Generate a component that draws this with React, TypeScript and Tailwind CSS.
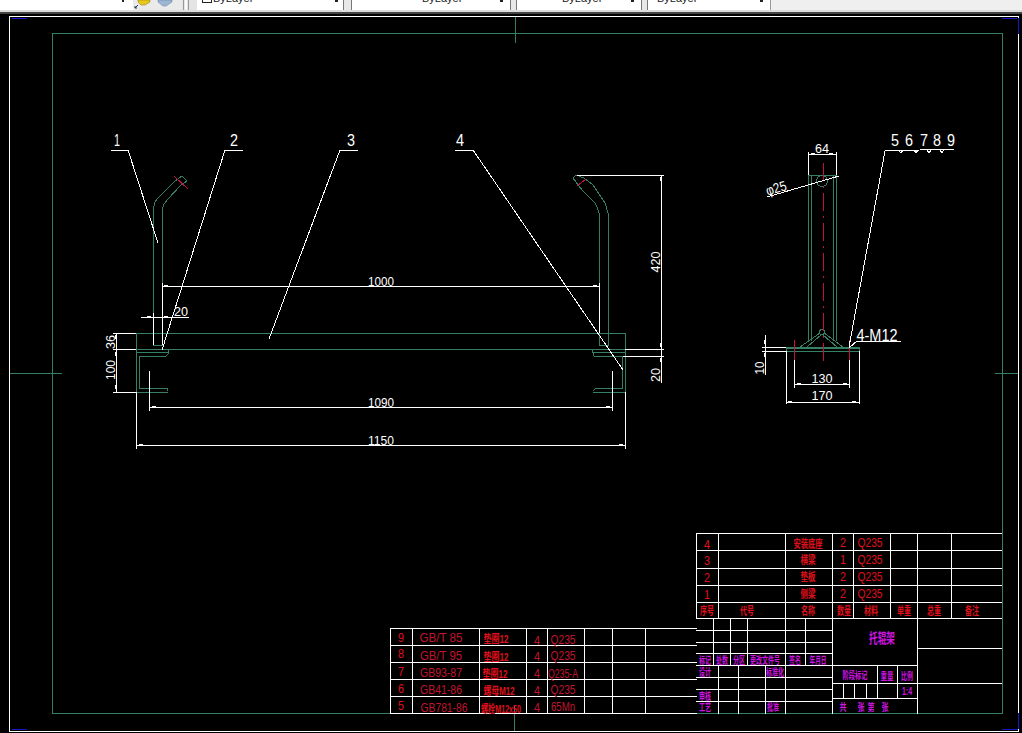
import React from 'react';

const GREEN = '#358062';
const CRIMSON = '#c0114a';
const RED = '#e0101c';
const DARK_RED = '#c2142f';
const MAGENTA = '#cf14e0';
const FONT = '"Liberation Sans", "Noto Sans CJK SC", sans-serif';

type Seg = [number, number, number, number];

function Segs({ color, items, dash }: { color: string; items: Seg[]; dash?: string }) {
  return (
    <g stroke={color} strokeWidth={1} strokeDasharray={dash} fill="none">
      {items.map((s, i) => (
        <line key={i} x1={s[0]} y1={s[1]} x2={s[2]} y2={s[3]} />
      ))}
    </g>
  );
}

function Poly({ pts, color = GREEN }: { pts: string; color?: string }) {
  return <polyline points={pts} fill="none" stroke={color} strokeWidth={1} />;
}

function T({
  x,
  y,
  t,
  w,
  s = 13,
  c = '#ffffff',
  r,
  b,
}: {
  x: number;
  y: number;
  t: string;
  w?: number;
  s?: number;
  c?: string;
  r?: number;
  b?: boolean;
}) {
  return (
    <text
      x={x}
      y={y}
      fill={c}
      fontSize={s}
      fontWeight={b ? 700 : 400}
      textAnchor="middle"
      dominantBaseline="central"
      textLength={w}
      lengthAdjust={w ? 'spacingAndGlyphs' : undefined}
      transform={r ? `rotate(${r} ${x} ${y})` : undefined}
      style={{ fontFamily: FONT }}
    >
      {t}
    </text>
  );
}

// little filled ticks that stand in for the dimension arrows
function Ticks({ items }: { items: [number, number][] }) {
  return (
    <g fill="#ffffff">
      {items.map((p, i) => (
        <rect key={i} x={p[0] - 2} y={p[1] - 1} width={4} height={2} />
      ))}
    </g>
  );
}

function VTicks({ items }: { items: [number, number][] }) {
  return (
    <g fill="#ffffff">
      {items.map((p, i) => (
        <rect key={i} x={p[0] - 1} y={p[1] - 2} width={2} height={4} />
      ))}
    </g>
  );
}

const hLines = (x1: number, x2: number, ys: number[]): Seg[] => ys.map((y) => [x1, y, x2, y]);
const vLines = (y1: number, y2: number, xs: number[]): Seg[] => xs.map((x) => [x, y1, x, y2]);

function FrontView() {
  return (
    <g>
      {/* left bracket */}
      <Poly pts="153,345 153,210 155,202 158,198 175,181 182,176 187,181 181,185 168,199 164,204 162,210 162,345 153,345" />
      {/* right bracket */}
      <Poly pts="599,345 599,213 597,207 595,203 582,190 573,178 576,175 584,178 593,185 605,203 608,213 608,345 599,345" />
      <Segs color={CRIMSON} items={[[174, 176, 188, 189], [577, 186, 586, 179]]} />
      {/* rail and channels */}
      <Segs
        color={GREEN}
        items={[
          [136, 333, 625, 333],
          [136, 349, 625, 349],
          [136, 333, 136, 392],
          [625, 333, 625, 392],
          [136, 352, 168, 352],
          [592, 352, 625, 352],
          [136, 392, 168, 392],
          [593, 392, 625, 392],
          [592, 349, 592, 352],
        ]}
      />
      <Poly pts="168,349 168,354 166,356 139,356 139,388 167,388 168,391" />
      <Poly pts="593,352 594,356 622,356 622,388 596,388 593,391" />
      {/* leaders */}
      <Segs
        color="#ffffff"
        items={[
          [111, 150, 128, 150],
          [128, 150, 158, 243],
          [225, 150, 243, 150],
          [225, 150, 162, 350],
          [340, 150, 358, 150],
          [340, 150, 269, 339],
          [455, 150, 473, 150],
          [473, 150, 623, 370],
        ]}
      />
      <T x={117} y={140} t="1" s={16} w={6} />
      <T x={234} y={140} t="2" s={16} w={8} />
      <T x={351} y={140} t="3" s={16} w={8} />
      <T x={460} y={140} t="4" s={16} w={8} />
      {/* dimensions */}
      <Segs
        color="#ffffff"
        items={[
          [162, 286, 599, 286],
          [162, 283, 162, 345],
          [153, 313, 153, 345],
          [599, 283, 599, 333],
          [141, 317, 189, 317],
          [149, 407, 612, 407],
          [149, 371, 149, 411],
          [612, 371, 612, 411],
          [136, 445, 625, 445],
          [136, 392, 136, 449],
          [625, 392, 625, 449],
          [116, 333, 116, 392],
          [113, 333, 136, 333],
          [113, 349, 136, 349],
          [113, 392, 136, 392],
          [577, 175, 664, 175],
          [661, 175, 661, 383],
          [625, 349, 664, 349],
          [623, 356, 664, 356],
        ]}
      />
      <Ticks items={[[166, 286], [595, 286], [149, 317], [166, 317], [154, 407], [608, 407], [141, 445], [621, 445]]} />
      <VTicks items={[[116, 337], [116, 354], [116, 387], [661, 179], [661, 345], [661, 360]]} />
      <T x={381} y={281} t="1000" w={26} />
      <T x={181} y={311} t="20" w={14} />
      <T x={381} y={402} t="1090" w={26} />
      <T x={381} y={440} t="1150" w={26} />
      <T x={110} y={342} t="36" r={-90} w={14} />
      <T x={110} y={370} t="100" r={-90} w={20} />
      <T x={655} y={262} t="420" r={-90} w={21} />
      <T x={655} y={375} t="20" r={-90} w={14} />
    </g>
  );
}

function SideView() {
  return (
    <g>
      <Segs
        color={GREEN}
        items={[
          ...vLines(175, 341, [808, 811, 833, 836]),
          [808, 175, 836, 175],
          [786, 347, 859, 347],
          [786, 351, 859, 351],
          [786, 348, 859, 348],
          [786, 347, 786, 351],
          [859, 347, 859, 351],
          [820, 333, 800, 347],
          [824, 333, 843, 347],
          [821, 335, 807, 347],
          [823, 335, 837, 347],
        ]}
      />
      <circle cx={822} cy={181} r={5.5} fill="none" stroke={GREEN} />
      <circle cx={822} cy={332} r={2.5} fill="none" stroke={GREEN} />
      <Segs color={CRIMSON} dash="18 5 2 5" items={[[823, 163, 823, 362]]} />
      <Segs color={CRIMSON} items={[[794, 340, 794, 360], [849, 340, 849, 360]]} />
      <Segs
        color="#ffffff"
        items={[
          [885, 151, 955, 149],
          [885, 151, 849, 347],
          [857, 341, 901, 341],
          [857, 341, 849, 348],
          [808, 152, 808, 175],
          [836, 152, 836, 175],
          [808, 154, 836, 154],
          [767, 197, 839, 176],
          [762, 347, 786, 347],
          [762, 351, 786, 351],
          [765, 335, 765, 375],
          [794, 360, 794, 388],
          [849, 360, 849, 388],
          [794, 384, 849, 384],
          [786, 351, 786, 404],
          [859, 351, 859, 404],
          [786, 402, 859, 402],
        ]}
      />
      {/* bumps below the 5 6 7 8 9 leader */}
      <Segs
        color="#ffffff"
        items={[
          [899, 151, 901, 153],
          [903, 150, 901, 153],
          [914, 150, 916, 153],
          [918, 150, 916, 153],
          [927, 150, 929, 153],
          [931, 150, 929, 153],
          [940, 150, 942, 153],
          [944, 149, 942, 153],
        ]}
      />
      <Ticks items={[[813, 154], [831, 154], [799, 384], [845, 384], [790, 402], [854, 402]]} />
      <VTicks items={[[765, 342], [765, 355]]} />
      {[
        ['5', 895],
        ['6', 909],
        ['7', 924],
        ['8', 937],
        ['9', 951],
      ].map(([t, x]) => (
        <T key={t} x={x as number} y={140} t={t as string} s={16} w={8} />
      ))}
      <T x={877} y={335} t="4-M12" s={16} w={41} />
      <T x={822} y={148} t="64" w={14} />
      <T x={776} y={188} t="φ25" r={-17} s={14} w={21} />
      <T x={759} y={368} t="10" r={-90} w={13} />
      <T x={822} y={378} t="130" w={21} />
      <T x={822} y={395} t="170" w={21} />
    </g>
  );
}

function PartsTable() {
  const rows = [
    { n: '9', ny: 637, code: 'GB/T 85', cx: 441, cw: 43, cy: 637, name: '垫圈12', nx: 496, nw: 25, qy: 640, mat: 'Q235', mw: 25, my: 639 },
    { n: '8', ny: 653, code: 'GB/T 95', cx: 441, cw: 42, cy: 655, name: '垫圈12', nx: 496, nw: 25, qy: 656, mat: 'Q235', mw: 25, my: 655 },
    { n: '7', ny: 671, code: 'GB93-87', cx: 441, cw: 42, cy: 672, name: '垫圈12', nx: 495, nw: 25, qy: 673, mat: 'Q235-A', mw: 30, my: 673 },
    { n: '6', ny: 688, code: 'GB41-86', cx: 441, cw: 42, cy: 689, name: '螺母M12', nx: 499, nw: 31, qy: 690, mat: 'Q235', mw: 25, my: 689 },
    { n: '5', ny: 705, code: 'GB781-86', cx: 444, cw: 47, cy: 707, name: '螺栓M12x50', nx: 501, nw: 40, qy: 707, mat: '65Mn', mw: 24, my: 706 },
  ];
  return (
    <g>
      <Segs
        color="#ffffff"
        items={[
          ...hLines(390, 697, [628, 645, 662, 679, 696, 713]),
          ...vLines(628, 713, [390, 412, 479, 526, 547, 584, 612, 645]),
        ]}
      />
      {rows.map((r) => (
        <g key={r.n}>
          <T x={401} y={r.ny} t={r.n} s={13} w={6} c={RED} />
          <T x={r.cx} y={r.cy} t={r.code} w={r.cw} c={DARK_RED} />
          <T x={r.nx} y={r.cy + 2} t={r.name} w={r.nw} s={11} c={RED} b />
          <T x={537} y={r.qy} t="4" c={DARK_RED} w={6} />
          <T x={563} y={r.my} t={r.mat} w={r.mw} c={DARK_RED} />
        </g>
      ))}
    </g>
  );
}

function MaterialsTable() {
  const rows = [
    { n: '4', y: 544, name: '安装底座', nw: 29, q: '2', my: 542 },
    { n: '3', y: 560, name: '横梁', nw: 15, q: '1', my: 559 },
    { n: '2', y: 577, name: '垫板', nw: 15, q: '2', my: 576 },
    { n: '1', y: 594, name: '侧梁', nw: 15, q: '2', my: 593 },
  ];
  const head: [string, number][] = [
    ['序号', 707],
    ['代号', 747],
    ['名称', 808],
    ['数量', 844],
    ['材料', 871],
    ['单重', 904],
    ['总重', 934],
    ['备注', 972],
  ];
  return (
    <g>
      <Segs
        color="#ffffff"
        items={[
          ...hLines(696, 1002, [533, 550, 568, 585, 602, 618]),
          ...vLines(533, 618, [696, 718, 785, 832, 853, 890, 917, 951]),
        ]}
      />
      {rows.map((r) => (
        <g key={r.n}>
          <T x={707} y={r.y} t={r.n} w={6} c={RED} />
          <T x={808} y={r.y} t={r.name} w={r.nw} s={11} c={RED} b />
          <T x={843} y={r.my} t={r.q} w={6} c={RED} />
          <T x={870} y={r.my} t="Q235" w={25} c={RED} />
        </g>
      ))}
      {head.map(([t, x]) => (
        <T key={t} x={x} y={611} t={t} w={14} s={11} c={RED} b />
      ))}
    </g>
  );
}

function TitleBlock() {
  const labels: [string, number, number, number][] = [
    ['标记', 705, 660, 12],
    ['处数', 722, 660, 12],
    ['分区', 739, 660, 12],
    ['更改文件号', 765, 660, 30],
    ['签名', 795, 660, 12],
    ['年月日', 818, 660, 17],
    ['设计', 705, 672, 12],
    ['标准化', 775, 672, 18],
    ['审核', 705, 696, 12],
    ['工艺', 705, 707, 12],
    ['批准', 773, 707, 12],
    ['阶段标记', 855, 675, 25],
    ['重量', 887, 676, 13],
    ['比例', 907, 676, 12],
    ['1:4', 907, 691, 10],
    ['共', 843, 707, 7],
    ['张', 861, 707, 7],
    ['第', 871, 707, 7],
    ['张', 885, 707, 7],
  ];
  return (
    <g>
      <Segs
        color="#ffffff"
        items={[
          ...hLines(696, 832, [630, 642, 653, 665, 677, 689, 701]),
          ...vLines(618, 665, [713, 730, 747, 785, 805]),
          ...vLines(665, 714, [718, 738, 765, 785]),
          [832, 618, 832, 714],
          [917, 618, 917, 714],
          [917, 648, 1002, 648],
          [832, 665, 917, 665],
          [832, 683, 1002, 683],
          [832, 698, 917, 698],
          [877, 665, 877, 698],
          [897, 665, 897, 698],
          [843, 683, 843, 698],
          [854, 683, 854, 698],
          [866, 683, 866, 698],
        ]}
      />
      {labels.map(([t, x, y, w]) => (
        <T key={t + x} x={x} y={y} t={t} w={w} s={10} c={MAGENTA} b />
      ))}
      <T x={882} y={638} t="托辊架" w={26} s={14} c={MAGENTA} b />
    </g>
  );
}

function Dropdown({ w, label, left }: { w: string; label: string; left: string }) {
  return (
    <div className={`relative flex h-full items-start overflow-hidden bg-white ${w}`}>
      <span className={`text-[11px] leading-[13px] text-[#222] -mt-[8px] ${left}`} style={{ fontFamily: FONT }}>
        {label}
      </span>
      <span className="absolute right-[7px] top-0 h-[2px] w-[3px] bg-[#222]" />
    </div>
  );
}

export default function App() {
  return (
    <div className="flex h-[733px] w-[1022px] flex-col overflow-hidden bg-black">
      {/* toolbar, cut off by the top of the window */}
      <div className="flex h-[14px] shrink-0 flex-col">
        <div className="flex h-[10px] bg-[#efefef]">
          <div className="relative h-full w-[133px] bg-white">
            <span className="absolute right-[9px] top-0 h-[2px] w-[2px] bg-[#222]" />
          </div>
          <div className="h-full w-[49px] bg-[#eaeaea]">
            <svg width="49" height="10" viewBox="0 0 49 10">
              <path d="M2 8 L5 5 M2 6 V8 H4" stroke="#223355" strokeWidth="1" fill="none" />
              <path d="M5 0 H17 V2 L12 5 H8 L5 2 Z" fill="#e8c81c" stroke="#8a7410" strokeWidth="0.5" />
              <path d="M25 0 H39 V2 L33 6 H30 L25 2 Z" fill="#9cb6d4" stroke="#5f7a99" strokeWidth="0.5" />
            </svg>
          </div>
          <div className="flex h-full w-[15px] gap-[1px] bg-[#e4e4e4] pl-[1px]">
            <span className="h-full w-[1px] bg-[#999]" />
            <span className="h-full w-[2px] bg-[#fafafa]" />
            <span className="h-full w-[1px] bg-[#999]" />
          </div>
          <div className="relative flex h-full w-[146px] items-start overflow-hidden bg-white">
            <span className="ml-[5px] h-[3px] w-[10px] border border-t-0 border-[#222]" />
            <span className="ml-[1px] -mt-[8px] text-[11px] leading-[13px] text-[#222]" style={{ fontFamily: FONT }}>
              ByLayer
            </span>
            <span className="absolute right-[5px] top-0 h-[2px] w-[3px] bg-[#222]" />
          </div>
          <div className="h-full w-[9px] border-x border-[#777] bg-[#e8e8e8]" />
          <Dropdown w="w-[158px]" label="ByLayer" left="ml-[70px]" />
          <div className="h-full w-[7px] border-x border-[#777] bg-[#e8e8e8]" />
          <Dropdown w="w-[124px]" label="ByLayer" left="ml-[45px]" />
          <div className="h-full w-[7px] border-x border-[#777] bg-[#e8e8e8]" />
          <Dropdown w="w-[122px]" label="ByLayer" left="ml-[9px]" />
          <div className="h-full w-[1px] bg-[#999]" />
          <div className="h-full flex-1 bg-[#efefef]" />
        </div>
        <div className="h-[2px] bg-[#dcdcdc]" />
        <div className="h-[2px] bg-[#444]" />
      </div>

      {/* model space */}
      <svg
        width="1022"
        height="719"
        viewBox="0 14 1022 719"
        shapeRendering="crispEdges"
        className="block shrink-0"
      >
        <rect x={9.5} y={16.5} width={1009} height={715} fill="none" stroke="#ffffff" />
        <rect x={52.5} y={33.5} width={950} height={680} fill="none" stroke={GREEN} />
        <Segs
          color={GREEN}
          items={[
            [515, 17, 515, 43],
            [514, 705, 514, 731],
            [10, 373, 62, 373],
            [995, 373, 1018, 373],
          ]}
        />
        <Segs
          color="#1616c8"
          items={[
            [12, 18, 27, 18],
            [1002, 18, 1017, 18],
            [1018, 18, 1018, 34],
            [1002, 729, 1018, 729],
            [1018, 713, 1018, 729],
            [12, 729, 27, 729],
          ]}
        />
        <FrontView />
        <SideView />
        <PartsTable />
        <MaterialsTable />
        <TitleBlock />
      </svg>
    </div>
  );
}
